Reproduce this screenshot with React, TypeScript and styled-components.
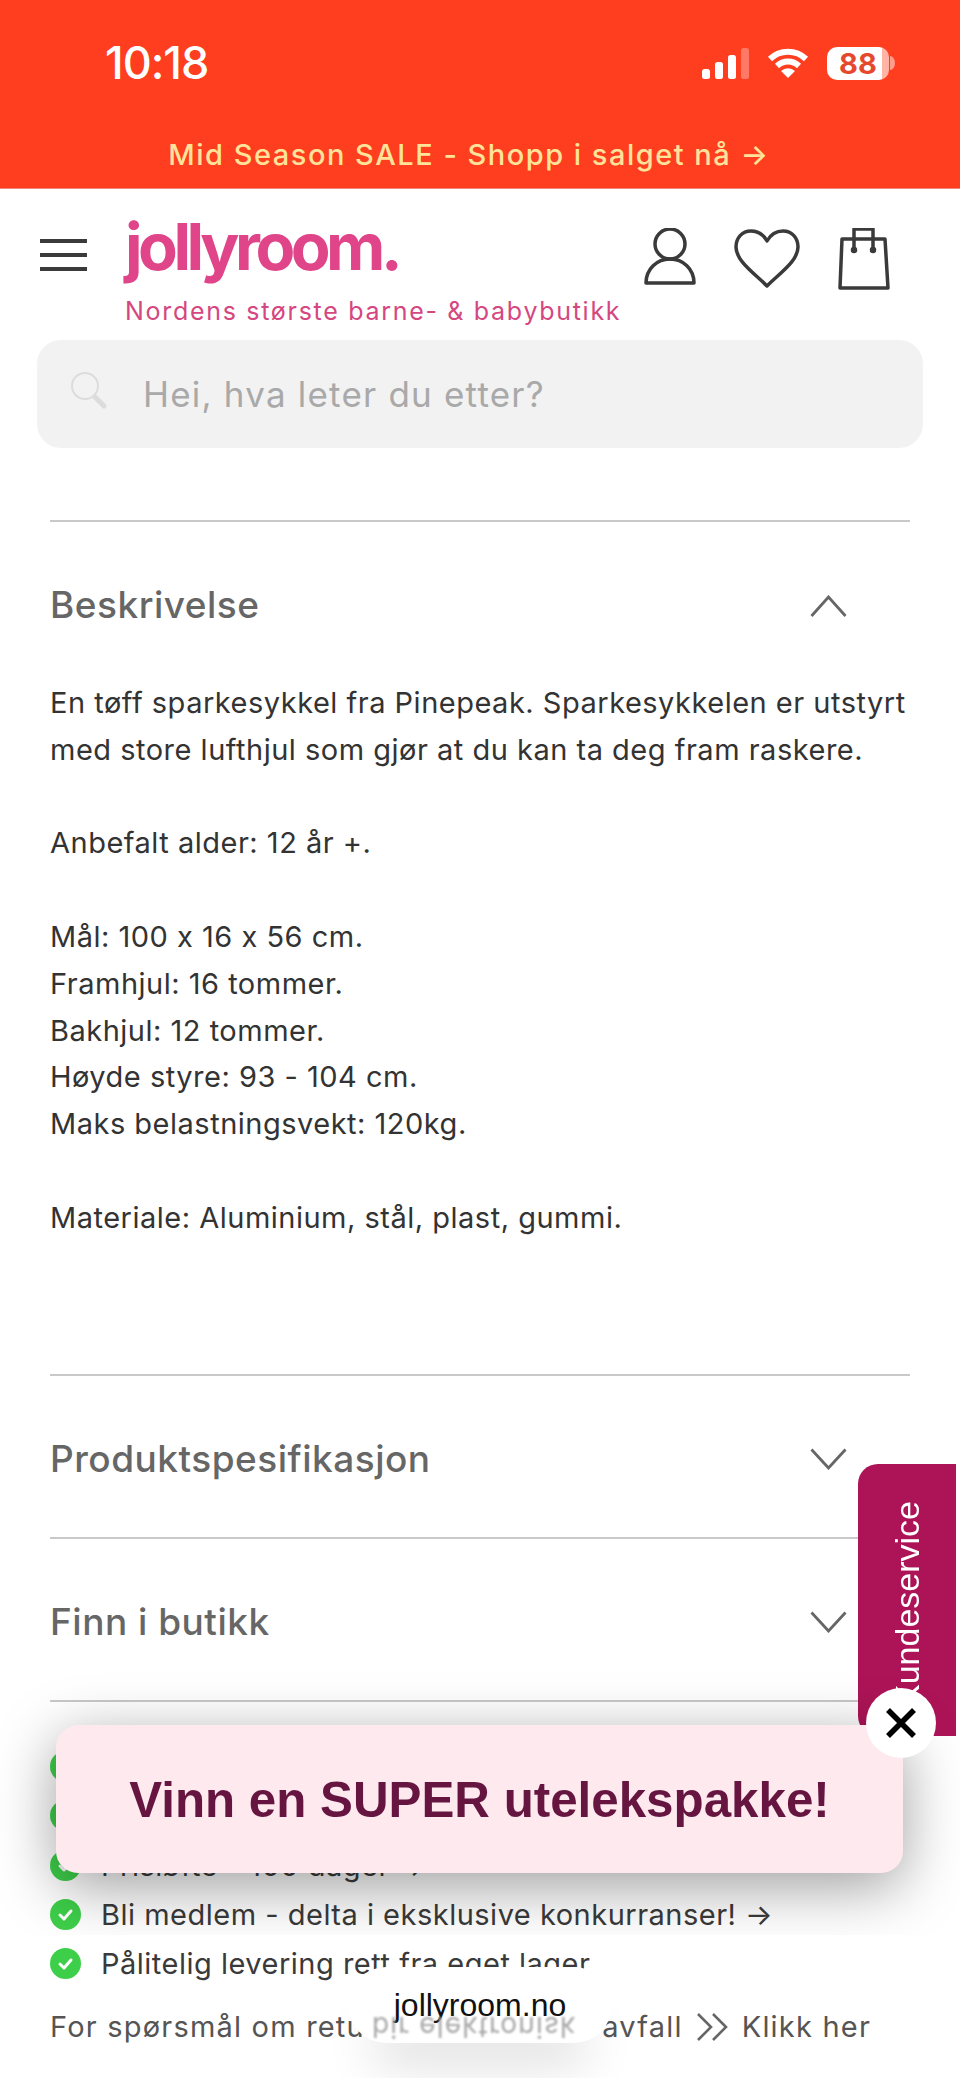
import styled, { createGlobalStyle } from "styled-components";

const GlobalStyle = createGlobalStyle`
  html, body {
    margin: 0;
    padding: 0;
    background: #fff;
  }
  body {
    font-family: "Inter", "Noto Sans", sans-serif;
  }
`;

const Page = styled.div`
  position: relative;
  width: 960px;
  height: 2078px;
  overflow: hidden;
  background: #fff;
`;

const RedBanner = styled.div`
  display: flex;
  flex-direction: column;
  height: 189px;
  background: #ff3d1f;
  border-bottom: 1px solid #f08a78;
  box-sizing: border-box;
`;

const StatusRow = styled.div`
  display: flex;
  align-items: center;
  height: 126px;
  padding: 0 65px 0 105px;
`;

const Clock = styled.div`
  margin-top: -2px;
  font-size: 45px;
  font-weight: 500;
  letter-spacing: -1px;
  color: #fff;
`;

const StatusIcons = styled.div`
  display: flex;
  align-items: center;
  margin-left: auto;
  gap: 18px;
`;

const BatteryWrap = styled.div`
  display: flex;
  align-items: center;
  gap: 1px;
`;

const Battery = styled.div`
  display: flex;
  align-items: center;
  justify-content: center;
  width: 62px;
  height: 33px;
  border-radius: 10px;
  background: linear-gradient(90deg, #fff 88%, #ffb4a6 88%);
  font-size: 29px;
  font-weight: 700;
  color: #e5482d;
`;

const SaleRow = styled.div`
  display: flex;
  align-items: center;
  justify-content: center;
  height: 56px;
  padding: 0 22px 6px 0;
  font-size: 29px;
  font-weight: 500;
  letter-spacing: 1.5px;
  color: #ffe39a;
`;

const Header = styled.div`
  display: flex;
  align-items: flex-start;
  height: 151px;
  padding-left: 40px;
`;

const Burger = styled.div`
  display: flex;
  flex-direction: column;
  gap: 10px;
  width: 47px;
  margin-top: 50px;
`;

const BurgerLine = styled.span`
  height: 4px;
  background: #3a3a3a;
`;

const Brand = styled.div`
  display: flex;
  flex-direction: column;
  margin: 16px 0 0 38px;
`;

const Logo = styled.div`
  font-size: 65px;
  font-weight: 700;
  line-height: 84px;
  letter-spacing: -4.5px;
  color: #e0458a;
`;

const Tagline = styled.div`
  margin-top: 4px;
  font-size: 25px;
  line-height: 36px;
  letter-spacing: 1.7px;
  white-space: nowrap;
  color: #d5477f;
`;

const HeaderIcons = styled.div`
  display: flex;
  gap: 38px;
  margin-left: auto;
  padding: 39px 70px 0 0;
`;

const SearchBox = styled.div`
  display: flex;
  align-items: center;
  gap: 36px;
  height: 108px;
  margin: 0 37px;
  padding-left: 33px;
  border-radius: 24px;
  background: #f2f2f2;
  font-size: 35px;
  letter-spacing: 1.2px;
  color: #a9a9a9;
`;

const SearchGlass = styled.svg`
  margin-top: -8px;
`;

const Accordion = styled.div`
  margin: 72px 50px 0;
`;

const AccordionHead = styled.div`
  display: flex;
  align-items: center;
  justify-content: space-between;
  box-sizing: border-box;
  height: 163px;
  padding: 4px 63px 0 0;
  border-top: 2px solid #c9c9c9;
  font-size: 37px;
  font-weight: 500;
  letter-spacing: 0.5px;
  color: #666;
`;

const ChevronSvg = styled.svg`
  margin-top: 2px;
`;

const Description = styled.div`
  margin-top: -3px;
  padding-bottom: 132px;
  font-size: 29px;
  line-height: 46.8px;
  letter-spacing: 0.5px;
  white-space: nowrap;
  color: #333;
`;

const Spacer = styled.div`
  height: 46.8px;
`;

const UspList = styled.div`
  margin: 0 50px;
  padding-top: 40px;
  border-top: 2px solid #c9c9c9;
`;

const UspRow = styled.div`
  display: flex;
  align-items: center;
  gap: 20px;
  height: 49.4px;
  font-size: 29px;
  letter-spacing: 0.5px;
  color: #3a3a3a;
`;

const ReturnLine = styled.div`
  display: flex;
  align-items: center;
  gap: 13px;
  margin: 15px 50px 0;
  font-size: 29px;
  line-height: 46px;
  letter-spacing: 1.2px;
  white-space: nowrap;
  color: #555;
`;

const ShadowLayer = styled.div`
  position: absolute;
  left: 0;
  top: 0;
  width: 960px;
  height: 1935px;
  overflow: hidden;
`;

const ServiceTab = styled.div`
  position: absolute;
  left: 858px;
  top: 1464px;
  display: flex;
  align-items: flex-start;
  justify-content: center;
  box-sizing: border-box;
  width: 98px;
  height: 272px;
  padding-top: 37px;
  border-radius: 20px 0 0 20px;
  background: #ad1457;
`;

const ServiceLabel = styled.span`
  writing-mode: vertical-rl;
  transform: rotate(180deg);
  font-family: "Liberation Sans", Arial, sans-serif;
  font-size: 34px;
  line-height: 1;
  white-space: nowrap;
  color: #fff;
`;

const Popup = styled.div`
  position: absolute;
  left: 56px;
  top: 1725px;
  display: flex;
  align-items: center;
  justify-content: center;
  width: 847px;
  height: 148px;
  border-radius: 22px;
  background: #fde9ee;
  box-shadow: 0 14px 60px rgba(0, 0, 0, 0.38);
  font-family: "Liberation Sans", Arial, sans-serif;
  font-size: 49.3px;
  font-weight: 700;
  color: #651540;
`;

const CloseButton = styled.div`
  position: absolute;
  left: 866px;
  top: 1688px;
  display: flex;
  align-items: center;
  justify-content: center;
  width: 70px;
  height: 70px;
  border-radius: 50%;
  background: #fff;
`;

const AddressPill = styled.div`
  position: absolute;
  left: 348px;
  top: 1967px;
  display: flex;
  justify-content: center;
  width: 264px;
  height: 76px;
  overflow: hidden;
  padding-top: 20px;
  box-sizing: border-box;
  border-radius: 38px;
  background: #fff;
  font-family: "Liberation Sans", Arial, sans-serif;
  font-size: 32px;
  line-height: 36px;
  color: #111;
`;

const PillGlow = styled.div`
  position: absolute;
  left: 370px;
  top: 2000px;
  width: 220px;
  height: 40px;
  border-radius: 20px;
  box-shadow: 0 24px 50px rgba(0, 0, 0, 0.14);
`;

const Reflection = styled.span`
  position: absolute;
  left: 24px;
  top: 45px;
  transform: scaleY(-1);
  filter: blur(1.2px);
  font-family: "Inter", sans-serif;
  font-size: 28px;
  line-height: 30px;
  letter-spacing: 1.2px;
  white-space: nowrap;
  color: #a8a8a8;
`;

function SignalIcon() {
  return (
    <svg width="48" height="31" viewBox="0 0 48 31">
      <rect x="1" y="21" width="8" height="10" rx="2.5" fill="#fff" />
      <rect x="14" y="14" width="8" height="17" rx="2.5" fill="#fff" />
      <rect x="27" y="7" width="8" height="24" rx="2.5" fill="#fff" />
      <rect x="40" y="0" width="8" height="31" rx="2.5" fill="#ff7a66" />
    </svg>
  );
}

function WifiIcon() {
  return (
    <svg width="42" height="30" viewBox="0 0 42 30">
      <path d="M3 11A26 26 0 0 1 39 11" fill="none" stroke="#fff" strokeWidth="6" />
      <path d="M10 18A16 16 0 0 1 32 18" fill="none" stroke="#fff" strokeWidth="6" />
      <path d="M21 30L14 23A10 10 0 0 1 28 23Z" fill="#fff" />
    </svg>
  );
}

function BatteryNub() {
  return (
    <svg width="5" height="14" viewBox="0 0 5 14">
      <path d="M0 0A5 7 0 0 1 0 14Z" fill="#ff9c8a" />
    </svg>
  );
}

function PersonIcon() {
  return (
    <svg width="52" height="62" viewBox="0 0 52 62" fill="none" stroke="#3a3a3a" strokeWidth="3.5" strokeLinejoin="round">
      <circle cx="26" cy="16" r="15" />
      <path d="M2 55C2 41 13 31 26 31S50 41 50 55Z" />
    </svg>
  );
}

function HeartIcon() {
  return (
    <svg width="66" height="62" viewBox="0 0 66 62" fill="none" stroke="#3a3a3a" strokeWidth="3.5" strokeLinejoin="round">
      <path d="M33 13C29 6 23 3 17 3C8 3 2 10 2 19C2 33 20 45 33 58C46 45 64 33 64 19C64 10 58 3 49 3C43 3 37 6 33 13Z" />
    </svg>
  );
}

function BagIcon() {
  return (
    <svg width="52" height="62" viewBox="0 0 52 62" fill="none" stroke="#3a3a3a" strokeWidth="3.5" strokeLinejoin="round">
      <path d="M4 11H47L50 60H2Z" />
      <path d="M16 22V1H35V22" />
      <circle cx="16" cy="22" r="1.5" fill="#3a3a3a" />
      <circle cx="35" cy="22" r="1.5" fill="#3a3a3a" />
    </svg>
  );
}

function SearchIcon() {
  return (
    <SearchGlass width="37" height="37" viewBox="0 0 37 37" fill="none">
      <circle cx="15" cy="14" r="13" stroke="#dcdcdc" strokeWidth="2" />
      <path d="M25 25L34 34" stroke="#dcdcdc" strokeWidth="5" strokeLinecap="round" />
    </SearchGlass>
  );
}

function Chevron({ up }: { up?: boolean }) {
  return (
    <ChevronSvg width="37" height="22" viewBox="0 0 37 22" fill="none">
      <path d={up ? "M1.5 21L18.5 2L35.5 21" : "M1.5 1.5L18.5 20L35.5 1.5"} stroke="#666" strokeWidth="2.8" />
    </ChevronSvg>
  );
}

function CheckIcon() {
  return (
    <svg width="31" height="31" viewBox="0 0 31 31">
      <circle cx="15.5" cy="15.5" r="15.5" fill="#3ecf4a" />
      <path d="M10 16L14 20L21 12" fill="none" stroke="#fff" strokeWidth="3" strokeLinecap="round" strokeLinejoin="round" />
    </svg>
  );
}

function CloseIcon() {
  return (
    <svg width="32" height="32" viewBox="0 0 32 32">
      <path d="M3 3L29 29M29 3L3 29" stroke="#000" strokeWidth="5.5" />
    </svg>
  );
}

function DoubleChevron() {
  return (
    <svg width="33" height="30" viewBox="0 0 33 30" fill="none" stroke="#666" strokeWidth="2.6">
      <path d="M2 2L15 15L2 28" />
      <path d="M17 2L30 15L17 28" />
    </svg>
  );
}

const usps = [
  "",
  "",
  "Prisløfte - 100 dager →",
  "Bli medlem - delta i eksklusive konkurranser! →",
  "Pålitelig levering rett fra eget lager",
];

export default function App() {
  return (
    <Page>
      <GlobalStyle />
      <RedBanner>
        <StatusRow>
          <Clock>10:18</Clock>
          <StatusIcons>
            <SignalIcon />
            <WifiIcon />
            <BatteryWrap>
              <Battery>88</Battery>
              <BatteryNub />
            </BatteryWrap>
          </StatusIcons>
        </StatusRow>
        <SaleRow>Mid Season SALE - Shopp i salget nå →</SaleRow>
      </RedBanner>

      <Header>
        <Burger>
          <BurgerLine />
          <BurgerLine />
          <BurgerLine />
        </Burger>
        <Brand>
          <Logo>jollyroom.</Logo>
          <Tagline>Nordens største barne- &amp; babybutikk</Tagline>
        </Brand>
        <HeaderIcons>
          <PersonIcon />
          <HeartIcon />
          <BagIcon />
        </HeaderIcons>
      </Header>

      <SearchBox>
        <SearchIcon />
        Hei, hva leter du etter?
      </SearchBox>

      <Accordion>
        <AccordionHead>
          Beskrivelse
          <Chevron up />
        </AccordionHead>
        <Description>
          En tøff sparkesykkel fra Pinepeak. Sparkesykkelen er utstyrt
          <br />
          med store lufthjul som gjør at du kan ta deg fram raskere.
          <Spacer />
          Anbefalt alder: 12 år +.
          <Spacer />
          Mål: 100 x 16 x 56 cm.
          <br />
          Framhjul: 16 tommer.
          <br />
          Bakhjul: 12 tommer.
          <br />
          Høyde styre: 93 - 104 cm.
          <br />
          Maks belastningsvekt: 120kg.
          <Spacer />
          Materiale: Aluminium, stål, plast, gummi.
        </Description>
        <AccordionHead>
          Produktspesifikasjon
          <Chevron />
        </AccordionHead>
        <AccordionHead>
          Finn i butikk
          <Chevron />
        </AccordionHead>
      </Accordion>

      <UspList>
        {usps.map((text, i) => (
          <UspRow key={i}>
            <CheckIcon />
            {text}
          </UspRow>
        ))}
      </UspList>
      <ReturnLine>
        For spørsmål om retur av elektronisk avfall
        <DoubleChevron />
        Klikk her
      </ReturnLine>

      <ShadowLayer>
        <ServiceTab>
          <ServiceLabel>Kundeservice</ServiceLabel>
        </ServiceTab>
        <Popup>Vinn en SUPER utelekspakke!</Popup>
        <CloseButton>
          <CloseIcon />
        </CloseButton>
      </ShadowLayer>

      <PillGlow />
      <AddressPill>
        jollyroom.no
        <Reflection>bir elektronisk</Reflection>
      </AddressPill>
    </Page>
  );
}
